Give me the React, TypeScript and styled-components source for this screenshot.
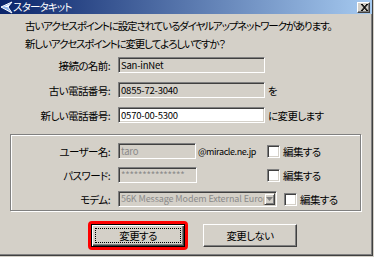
import * as React from 'react'
import styled, { createGlobalStyle } from 'styled-components'

const GlobalStyle = createGlobalStyle`
  html, body {
    margin: 0;
    padding: 0;
    background: #d4d0c8;
  }
  body {
    font-family: "Noto Sans CJK JP", "Noto Sans", sans-serif;
    font-size: 10.5px;
    letter-spacing: -0.6px;
    color: #000;
    font-feature-settings: "palt";
  }
`

const Window = styled.div`
  width: 373px;
  height: 256px;
  box-sizing: border-box;
  background: #d4d0c8;
  border-right: 1px solid #404040;
  border-bottom: 1px solid #404040;
  box-shadow: inset -1px -1px #808080;
  display: flex;
  flex-direction: column;
`

const TitleBar = styled.div`
  height: 14px;
  display: flex;
  align-items: center;
  background: linear-gradient(to right, #0a246a, #a6caf0);
  color: #fff;
  padding-right: 2px;
`

const TitleText = styled.span`
  flex: 1;
  font-size: 10.5px;
  letter-spacing: -0.8px;
  line-height: 14px;
`

const CloseButton = styled.div`
  width: 13px;
  height: 11px;
  box-sizing: border-box;
  background: #d4d0c8;
  border: 1px solid;
  border-color: #fff #404040 #404040 #fff;
  box-shadow: inset -1px -1px #808080;
  display: flex;
  align-items: center;
  justify-content: center;
`

const Message = styled.div`
  margin: 3px 0 0 25px;
  line-height: 18px;
  letter-spacing: -1.15px;
  white-space: nowrap;
`

const Form = styled.div`
  margin-top: 4px;
  display: flex;
  flex-direction: column;
  gap: 9px;
`

const Row = styled.div`
  display: flex;
  align-items: center;
  height: 16px;
`

const Label = styled.div<{ $w: number }>`
  width: ${p => p.$w}px;
  text-align: right;
  margin-right: 8px;
  white-space: nowrap;
`

const Field = styled.div<{ $w: number; $white?: boolean; $dim?: boolean }>`
  width: ${p => p.$w}px;
  height: 16px;
  box-sizing: border-box;
  border: 1px solid;
  border-color: #808080 #fff #fff #808080;
  box-shadow: inset 1px 1px #404040, inset -1px -1px #d4d0c8;
  background: ${p => (p.$white ? '#fff' : '#d4d0c8')};
  color: ${p => (p.$dim ? '#8a8a8a' : '#000')};
  padding: 0 2px;
  font-size: 9.5px;
  letter-spacing: -0.2px;
  line-height: 14px;
  white-space: nowrap;
  overflow: hidden;
  display: flex;
  align-items: center;
  flex-shrink: 0;
`

const Suffix = styled.span`
  margin-left: 3px;
  white-space: nowrap;
`

const Domain = styled.span`
  margin-left: 2px;
  font-size: 9px;
  letter-spacing: -0.4px;
  white-space: nowrap;
`

const Cell = styled.div<{ $w: number }>`
  width: ${p => p.$w}px;
  display: flex;
  align-items: center;
  flex-shrink: 0;
`

const Group = styled.div`
  margin: 11px 11px 0 10px;
  height: 77px;
  box-sizing: border-box;
  border: 1px solid #808080;
  box-shadow: inset 1px 1px #fff, 1px 1px #fff;
  padding-top: 8px;
  display: flex;
  flex-direction: column;
  gap: 8px;
`

const SelectText = styled.span`
  flex: 1;
  overflow: hidden;
  font-size: 9px;
  letter-spacing: -0.1px;
`

const DropButton = styled.div`
  width: 11px;
  height: 12px;
  margin-right: -1px;
  flex-shrink: 0;
  box-sizing: border-box;
  background: #d4d0c8;
  border: 1px solid;
  border-color: #d4d0c8 #404040 #404040 #d4d0c8;
  box-shadow: inset 1px 1px #fff, inset -1px -1px #808080;
  display: flex;
  align-items: center;
  justify-content: center;
`

const Check = styled.label<{ $ml?: number }>`
  display: flex;
  align-items: center;
  gap: 3px;
  margin-left: ${p => p.$ml ?? 0}px;
  white-space: nowrap;
`

const Box = styled.span`
  width: 13px;
  height: 13px;
  box-sizing: border-box;
  background: #fff;
  border: 1px solid;
  border-color: #808080 #fff #fff #808080;
  box-shadow: inset 1px 1px #404040, inset -1px -1px #d4d0c8;
`

const ButtonRow = styled.div`
  margin-top: 10px;
  padding-left: 88px;
  display: flex;
  align-items: center;
  gap: 15px;
`

const Highlight = styled.div`
  border: 3px solid #f00;
  border-radius: 4px;
  display: flex;
`

const Button = styled.div<{ $default?: boolean }>`
  width: 94px;
  height: 23px;
  box-sizing: border-box;
  background: #d4d0c8;
  border: 1px solid;
  border-color: ${p => (p.$default ? '#000' : '#fff #404040 #404040 #fff')};
  box-shadow: ${p =>
    p.$default
      ? 'inset 1px 1px #fff, inset -1px -1px #404040, inset -2px -2px #808080'
      : 'inset -1px -1px #808080'};
  display: flex;
  align-items: center;
  justify-content: center;
  padding: 3px;
`

const Focus = styled.div`
  flex: 1;
  align-self: stretch;
  border: 1px dotted #000;
  display: flex;
  align-items: center;
  justify-content: center;
`

const TitleIcon = () => (
  <svg width="13" height="13" viewBox="0 0 13 13">
    <polygon points="1,6 12,1 8,6 12,12" fill="#8fb4ec" stroke="#fff" strokeWidth="1" />
    <polygon points="4,6 10,3 8,6" fill="#fff" />
  </svg>
)

const CloseIcon = () => (
  <svg width="8" height="7" viewBox="0 0 8 7">
    <path d="M1 0 L7 7 M2 0 L8 7 M7 0 L1 7 M8 0 L2 7" stroke="#000" strokeWidth="1" />
  </svg>
)

const Arrow = () => (
  <svg width="7" height="4" viewBox="0 0 7 4">
    <polygon points="0,0 7,0 3.5,4" fill="#808080" />
  </svg>
)

export default function App() {
  return (
    <>
      <GlobalStyle />
      <Window>
        <TitleBar>
          <TitleIcon />
          <TitleText>スタータキット</TitleText>
          <CloseButton>
            <CloseIcon />
          </CloseButton>
        </TitleBar>
        <Message>
          <div>古いアクセスポイントに設定されているダイヤルアップネットワークがあります。</div>
          <div>新しいアクセスポイントに変更してよろしいですか？</div>
        </Message>
        <Form>
          <Row>
            <Label $w={110}>接続の名前:</Label>
            <Field $w={147}>San-inNet</Field>
          </Row>
          <Row>
            <Label $w={110}>古い電話番号:</Label>
            <Field $w={147}>0855-72-3040</Field>
            <Suffix>を</Suffix>
          </Row>
          <Row>
            <Label $w={110}>新しい電話番号:</Label>
            <Field $w={147} $white>0570-00-5300</Field>
            <Suffix>に変更します</Suffix>
          </Row>
        </Form>
        <Group>
          <Row>
            <Label $w={99}>ユーザー名:</Label>
            <Cell $w={149}>
              <Field $w={78} $dim>taro</Field>
              <Domain>@miracle.ne.jp</Domain>
            </Cell>
            <Check>
              <Box />
              編集する
            </Check>
          </Row>
          <Row>
            <Label $w={99}>パスワード:</Label>
            <Cell $w={149}>
              <Field $w={79} $dim>***************</Field>
            </Cell>
            <Check>
              <Box />
              編集する
            </Check>
          </Row>
          <Row>
            <Label $w={99}>モデム:</Label>
            <Field $w={159} $dim>
              <SelectText>56K Message Modem External Europe</SelectText>
              <DropButton>
                <Arrow />
              </DropButton>
            </Field>
            <Check $ml={7}>
              <Box />
              編集する
            </Check>
          </Row>
        </Group>
        <ButtonRow>
          <Highlight>
            <Button $default>
              <Focus>変更する</Focus>
            </Button>
          </Highlight>
          <Button>変更しない</Button>
        </ButtonRow>
      </Window>
    </>
  )
}
